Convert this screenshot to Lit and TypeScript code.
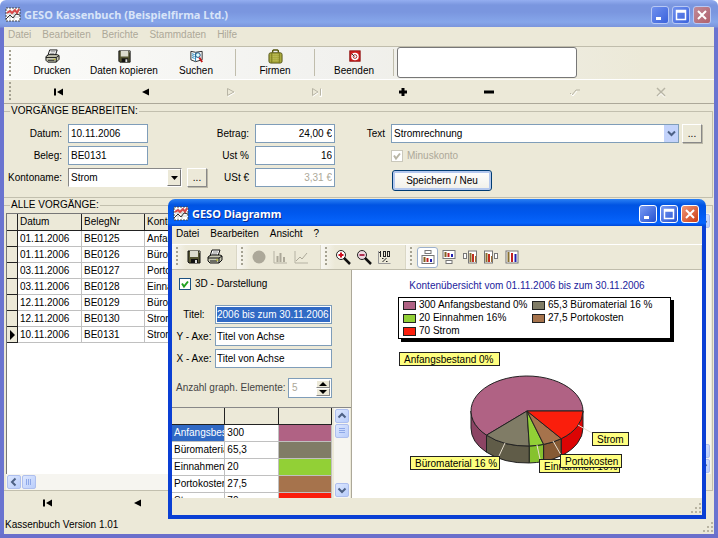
import { LitElement, html, svg, css, nothing } from "lit";
import { customElement, property } from "lit/decorators.js";
import { classMap } from "lit/directives/class-map.js";

const base = css`
  :host, * { box-sizing: border-box; }
  button, input, select { font: inherit; color: inherit; margin: 0; padding: 0; border-radius: 0; }
  button { background: none; border: 0; }
  svg { display: block; flex: none; }
  .grip {
    width: 2px; height: 20px; flex: none;
    background: repeating-linear-gradient(#a5a292 0 2px, transparent 2px 4px);
  }
  .tall { height: 27px; }
`;

const icons: Record<string, unknown> = {
  app: svg`<rect x="1" y="1" width="14" height="13" fill="#fff" stroke="#444" stroke-dasharray="2 1"/><path d="M2 4h12M2 7h12M2 10h12M5 2v11M9 2v11" stroke="#ccc"/><path d="M2 6l3-2 2 2 3-3 2 3 2-4" stroke="#d84848" fill="none" stroke-width="2"/><path d="M1 12l4-4 3 3 3-4 4 1" stroke="#333" fill="none"/>`,
  print: svg`<path d="M5 1h8l-2 6H3z" fill="#fff" stroke="#111"/><path d="M6 3h5M5 5h5" stroke="#888"/><path d="M1 8l3-2h9l2 1v4l-3 3H3l-2-2z" fill="#c8c8b4" stroke="#111"/><path d="M1 9h11l3-2M12 9v5M3 12h7" stroke="#111" fill="none"/><path d="M9 11h2" stroke="#b8b800"/>`,
  save: svg`<path d="M2 2h12v12H3l-1-1z" fill="#555533" stroke="#111"/><rect x="4" y="2" width="8" height="6" fill="#dcdccf"/><rect x="5" y="10" width="7" height="4" fill="#111"/><rect x="9" y="11" width="2" height="3" fill="#ddd"/><path d="M13 3h1" stroke="#ccc"/>`,
  search: svg`<path d="M2 2.500l5 1 7-1v9l-7 2-5-2z" fill="#fff" stroke="#222"/><path d="M7 4v9M3 5l3 1M3 7l3 1M3 9l3 1" stroke="#1b7fb5" fill="none"/><circle cx="9.500" cy="6.500" r="2.500" fill="#dff" stroke="#147"/><path d="M11 9l3 5" stroke="#c01818" stroke-width="2"/>`,
  bag: svg`<path d="M5 4V2l1-1h4l1 1v2" fill="none" stroke="#55550a" stroke-width="1.5"/><rect x="1" y="4" width="14" height="11" rx="2" fill="#a9a93c" stroke="#55551a"/><path d="M3 6h10M3 8h10M3 10h10M3 12h10" stroke="#c9c96a" stroke-dasharray="1 1"/><path d="M4 4v11M12 4v11" stroke="#77771c"/>`,
  quit: svg`<rect x="3" y="2" width="11" height="11" fill="#d42020" stroke="#8c0808"/><circle cx="8.500" cy="8" r="4" fill="#fff"/><circle cx="8.500" cy="8" r="2" fill="none" stroke="#a22"/><path d="M5 5l3 3" stroke="#222"/>`,
  pie: svg`<circle cx="8" cy="8" r="6.5" fill="#aca899"/>`,
  bars: svg`<path d="M2 2v12h13" fill="none" stroke="#b5b2a3"/><path d="M5.500 7v6M8.500 4v9M12 8v5" stroke="#aca899" stroke-width="2"/>`,
  line: svg`<path d="M2 2v12h13" fill="none" stroke="#b5b2a3"/><path d="M3 12l4-4 2 2 5-6" fill="none" stroke="#aca899"/>`,
  zoomin: svg`<circle cx="6" cy="6" r="4.500" fill="#fff" stroke="#222"/><path d="M3.500 6h5M6 3.500v5" stroke="#d01020" stroke-width="2"/><path d="M9 9l6 6" stroke="#111" stroke-width="2.500"/>`,
  zoomout: svg`<circle cx="6" cy="6" r="4.500" fill="#ecd8e0" stroke="#222"/><path d="M3.500 6h5" stroke="#b03050" stroke-width="2"/><path d="M9 9l6 6" stroke="#111" stroke-width="2.500"/>`,
  percent: svg`<path d="M1.500 2v12.500h12" stroke="#999" fill="none"/><path d="M3.500 2v6M2 3.500h1" fill="none" stroke="#222"/><rect x="6.500" y="2.500" width="2" height="5" fill="none" stroke="#222"/><rect x="10.500" y="2.500" width="2" height="5" fill="none" stroke="#222"/><path d="M5.500 13l4-4M5 9.500h1.500M9 12.500h1.500" stroke="#222"/>`,
  legTop: svg`<rect x="5" y="1.500" width="6" height="3" fill="#fff" stroke="#777"/><rect x="2" y="6.500" width="12" height="8" fill="#fff" stroke="#777"/><path d="M4.500 8v5" stroke="#806020" stroke-width="2"/><path d="M7.500 9v4" stroke="#c02020" stroke-width="2"/><path d="M11 10v3" stroke="#2020b0" stroke-width="2"/>`,
  legBottom: svg`<rect x="2" y="1.500" width="12" height="8" fill="#fff" stroke="#777"/><rect x="5" y="11.500" width="6" height="3" fill="#fff" stroke="#777"/><path d="M4.500 3v5" stroke="#806020" stroke-width="2"/><path d="M7.500 4v4" stroke="#c02020" stroke-width="2"/><path d="M11 5v3" stroke="#2020b0" stroke-width="2"/>`,
  legLeft: svg`<rect x="1.500" y="4.500" width="3" height="5" fill="#fff" stroke="#777"/><rect x="6.500" y="2" width="8" height="12" fill="#fff" stroke="#777"/><path d="M8.500 4v9" stroke="#887030" stroke-width="2"/><path d="M11 5v8" stroke="#c03020" stroke-width="2"/><path d="M13.500 7v6" stroke="#a07030"/>`,
  legRight: svg`<rect x="1.500" y="2" width="8" height="12" fill="#fff" stroke="#777"/><rect x="11.500" y="4.500" width="3" height="5" fill="#fff" stroke="#777"/><path d="M3.500 4v9" stroke="#887030" stroke-width="2"/><path d="M6 5v8" stroke="#c03020" stroke-width="2"/><path d="M8.500 7v6" stroke="#a07030"/>`,
  legNone: svg`<rect x="2" y="2" width="12" height="12" fill="#fff" stroke="#777"/><path d="M4.500 3v10" stroke="#887030" stroke-width="2"/><path d="M8 4v9" stroke="#c02020" stroke-width="2"/><path d="M11.500 5v8" stroke="#2020b0" stroke-width="2"/>`,
  first: svg`<path d="M4 4.500v7" stroke="#000" stroke-width="2"/><path d="M12 4.500v7L6 8z" fill="#000"/>`,
  prev: svg`<path d="M12 4.500v7L5 8z" fill="#000"/>`,
  next: svg`<path d="M4.500 4.500v7L11 8z" fill="none" stroke="#b8b5a5"/><path d="M5 12.500L12 8.500" stroke="#fff"/>`,
  last: svg`<path d="M3.500 4.500v7L9 8zM11.500 4.500v7" fill="none" stroke="#b8b5a5"/><path d="M12.500 5v7.500h-2M4 12.500L9 9" fill="none" stroke="#fff"/>`,
  plus: svg`<path d="M4 8h8M8 4v8" stroke="#000" stroke-width="3"/>`,
  minus: svg`<path d="M3 8h10" stroke="#000" stroke-width="3"/>`,
  check: svg`<path d="M3 9l2 2 4-5h4" fill="none" stroke="#b8b5a5"/><path d="M4 10l2 2 4-5" fill="none" stroke="#fff"/>`,
  cross: svg`<path d="M4 4l8 8M12 4l-8 8" stroke="#b8b5a5" stroke-width="1.500"/><path d="M5 12.500l3-3 4 4" fill="none" stroke="#fff"/>`,
};

const icon = (name: string, size = 16) =>
  html`<svg width=${size} height=${size} viewBox="0 0 16 16" aria-hidden="true">${icons[name]}</svg>`;

@customElement("title-bar")
class TitleBar extends LitElement {
  @property() caption = "";
  @property({ type: Boolean, reflect: true }) active = false;

  static styles = [base, css`
    :host {
      display: flex; align-items: center; gap: 3px; height: 27px; flex: none; padding: 3px 3px 0 1px;
      color: #d8e4f8; font: bold 11px/16px "Noto Sans", sans-serif;
    }
    .caption { flex: 1; margin: 0; font: inherit; white-space: nowrap; overflow: hidden; }
    :host([active]) { color: #fff; text-shadow: 1px 1px #0a2a90; }
    button {
      width: 18px; height: 18px; flex: none; border: 1px solid #b8c8f4; border-radius: 3px;
      background: linear-gradient(135deg, #6f90ee, #3a62dc); display: grid; place-items: center;
    }
    :host([active]) button { border-color: #fff; background: linear-gradient(135deg, #7a9cf4, #2450d0); }
    button.close { background: linear-gradient(135deg, #c08a98, #b0616c); }
    :host([active]) button.close { background: linear-gradient(135deg, #f09878, #cc3c14); }
  `];

  render() {
    return html`
      ${icon("app")}
      <h1 class="caption">${this.caption}</h1>
      <button aria-label="Minimieren"><svg width="12" height="12"><path d="M2 9.500h5" stroke="#fff" stroke-width="3"/></svg></button>
      <button aria-label="Maximieren"><svg width="12" height="12"><path d="M1.500 1.500h9v9h-9zM1 3h10" fill="none" stroke="#fff" stroke-width="1.500"/></svg></button>
      <button class="close" aria-label="Schließen"><svg width="12" height="12"><path d="M2 2l8 8M10 2l-8 8" stroke="#fff" stroke-width="2"/></svg></button>
    `;
  }
}

@customElement("scroll-bar")
class ScrollBar extends LitElement {
  @property({ reflect: true }) dir = "v";
  @property({ reflect: true }) at = "start";

  static styles = [base, css`
    :host { display: flex; flex-direction: column; width: 16px; background: #f6f5f0; padding: 1px; gap: 1px; flex: none; }
    :host([dir="h"]) { flex-direction: row; width: auto; height: 16px; }
    button, .thumb {
      width: 14px; height: 14px; flex: none; display: grid; place-items: center;
      border: 1px solid #aebfee; border-radius: 2px; background: linear-gradient(135deg, #dde7fe, #b9cdfb);
    }
    .room { flex: 1; }
  `];

  render() {
    const h = this.dir === "h";
    const arrow = (d: string, label: string) => html`
      <button aria-label=${label}><svg width="10" height="10"><path d=${d} fill="none" stroke="#4d6185" stroke-width="2"/></svg></button>`;
    const room = html`<div class="room"></div>`;
    return html`
      ${arrow(h ? "M6.500 1.500L3 5l3.500 3.500" : "M1.500 6.500L5 3l3.500 3.500", "Zurück")}
      ${this.at === "end" ? room : nothing}
      <div class="thumb"><svg width="8" height="8"><path d=${h ? "M1.500 1v6M3.500 1v6M5.500 1v6" : "M1 1.500h6M1 3.500h6M1 5.500h6"} stroke="#8ea8e8"/></svg></div>
      ${this.at === "end" ? nothing : room}
      ${arrow(h ? "M3.500 1.500L7 5 3.500 8.500" : "M1.500 3.500L5 7l3.500-3.500", "Weiter")}
    `;
  }
}

interface Slice { name: string; value: number; top: string; side: string; tag: number[]; leader: string; }

const slices: Slice[] = [
  { name: "Anfangsbestand 0%", value: 300, top: "#b06284", side: "#8c4464", tag: [47, 7, 100], leader: "" },
  { name: "Büromaterial 16 %", value: 65.3, top: "#807c66", side: "#605c48", tag: [58, 111, 89], leader: "M153 98l-6 13" },
  { name: "Einnahmen 16%", value: 20, top: "#92d036", side: "#86c22e", tag: [187, 114, 80], leader: "M185 100l3 14" },
  { name: "Portokosten", value: 27.5, top: "#a6734c", side: "#865a34", tag: [208, 109, 61], leader: "M201 96l8 14" },
  { name: "Strom", value: 70, top: "#fa1e0c", side: "#dc0404", tag: [240, 87, 36], leader: "M226 80l14 8" },
];
const amount = (v: number) => String(v).replace(".", ",");

@customElement("pie-chart")
class PieChart extends LitElement {
  static styles = css`
    :host { display: block; }
    svg { display: block; margin: 0 auto; }
    text { font: 10px "Liberation Sans", sans-serif; fill: #000; }
  `;

  render() {
    const cx = 175, cy = 66, rx = 56, ry = 35, depth = 17;
    const total = slices.reduce((sum, s) => sum + s.value, 0);
    const at = (a: number) => [cx + rx * Math.cos(a), cy - ry * Math.sin(a)];
    let from = 0;
    const parts = slices.map((s) => {
      const to = from + (s.value / total) * 2 * Math.PI;
      const [x0, y0] = at(from);
      const [x1, y1] = at(to);
      const big = to - from > Math.PI ? 1 : 0;
      const [sx, sy] = at(Math.max(from, Math.PI));
      const part = svg`
        <path fill=${s.side} d="M${sx} ${sy}A${rx} ${ry} 0 0 0 ${x1} ${y1}v${depth}A${rx} ${ry} 0 0 1 ${sx} ${sy + depth}z"/>
        <path fill=${s.top} d="M${cx} ${cy}L${x0} ${y0}A${rx} ${ry} 0 ${big} 0 ${x1} ${y1}z"/>`;
      from = to;
      return part;
    });
    return html`
      <svg width="350" height="140" viewBox="0 0 350 140" role="img" aria-label="Kontenübersicht">
        <g stroke="#222">${parts}</g>
        ${slices.map((s) => svg`
          <path d=${s.leader} stroke="#e8e0d0" fill="none"/>
          <rect x=${s.tag[0] + 0.5} y=${s.tag[1] + 0.5} width=${s.tag[2]} height="13" fill="#ffff80" stroke="#222"/>
          <text x=${s.tag[0] + 5} y=${s.tag[1] + 11}>${s.name}</text>`)}
      </svg>`;
  }
}

@customElement("chart-window")
class ChartWindow extends LitElement {
  static styles = [base, css`
    :host {
      display: flex; flex-direction: column; padding: 0 4px 4px; border-radius: 7px 7px 0 0; overflow: hidden;
      background: linear-gradient(#2a80f4, #0054e3 6px, #0058ee 14px, #0664fc 24px, #0048d8 27px, #0a3fd4 28px);
      font: 10px/12px "Liberation Sans", sans-serif; color: #000;
    }
    .menu { display: flex; gap: 11px; padding: 2px 4px 4px; background: #ece9d8; height: 18px; }
    .tools { display: grid; grid-template-columns: 65px 84px 85px 1fr; background: #ece9d8; border-top: 1px solid #fff; border-bottom: 1px solid #c0bdac; height: 26px; }
    .band { display: flex; align-items: center; padding-left: 4px; border-right: 1px solid #dad7c6; background: linear-gradient(90deg, #f8f7f2, #ece9d8 14px); }
    .grip { margin-right: 5px; }
    .tool { width: 21px; height: 21px; display: grid; place-items: center; border: 1px solid transparent; }
    .on { background: #fff; border-color: #9cb0cc; border-radius: 3px; }
    .body { flex: 1; min-height: 0; display: grid; grid-template-columns: 180px 1fr; background: #ece9d8; }
    .side { display: flex; flex-direction: column; min-height: 0; border-right: 1px solid #aca899; }
    .form { display: grid; grid-template-columns: 36px 117px; gap: 3px; padding: 8px 0 9px 4px; align-items: center; justify-items: center; }
    .form label { white-space: nowrap; }
    .form input.box { width: 117px; height: 19px; border: 1px solid #7f9db9; background: #fff; padding: 1px; }
    .form input.picked { color: #fff; background: #316ac5 content-box; box-shadow: inset 0 0 0 1px #fff; }
    .form .three { grid-column: 1 / -1; justify-self: start; display: flex; align-items: center; gap: 4px; margin: 0 0 12px 3px; }
    .three input { appearance: none; width: 12px; height: 12px; border: 1px solid #1c5180; background: #fff; }
    .mark { display: grid; }
    .mark > * { grid-area: 1 / 1; }
    .count { grid-column: 1 / -1; justify-self: stretch; display: flex; align-items: center; justify-content: space-between; margin-top: 7px; color: #444; }
    .spin { display: flex; width: 44px; height: 20px; border: 1px solid #7f9db9; background: #fff; padding: 1px; }
    .spin input { width: 0; flex: 1; border: 0; padding-left: 2px; background: none; color: #aca899; appearance: textfield; }
    .spin input::-webkit-inner-spin-button { display: none; }
    .steps { display: grid; width: 14px; }
    .steps button { background: #ece9d8; border: 1px solid #fff; border-right-color: #888; border-bottom-color: #888; display: grid; place-items: center; }
    .data { flex: 1; min-height: 0; display: flex; justify-content: space-between; overflow: hidden; border-top: 1px solid #888; padding-right: 1px; }
    .clip { overflow: hidden; }
    table { table-layout: fixed; width: 160px; border-collapse: separate; border-spacing: 0; background: #fff; }
    th { height: 17px; padding: 0; background: #ece9d8; border-right: 1px solid #222; border-bottom: 1px solid #222; }
    td { height: 17px; padding: 0 0 0 2px; border-right: 1px solid #c0c0c0; border-bottom: 1px solid #c0c0c0; white-space: nowrap; overflow: hidden; }
    .sel { background: #316ac5; color: #fff; }
    .chart { background: #fff; padding: 9px 0 0; min-width: 0; overflow: hidden; }
    h2 { margin: 0 0 5px; font: inherit; line-height: 13px; color: #1c1c9c; text-align: center; }
    .legend {
      display: grid; grid-template-columns: 129px 1fr; row-gap: 1px; margin: 0 31px 0 46px; padding: 1px 4px; list-style: none;
      border: 1px solid #000; box-shadow: 3px 3px #000; line-height: 12px;
    }
    .legend li { display: flex; align-items: center; gap: 3px; white-space: nowrap; height: 12px; }
    .legend i { width: 13px; height: 9px; border: 1px solid #222; }
    pie-chart { margin-top: 6px; }
    .foot { height: 17px; background: #ece9d8; display: flex; justify-content: flex-end; align-items: flex-end; padding: 1px; }
  `];

  render() {
    const band = (names: string[]) => html`
      <div class="band"><span class="grip"></span>${names.map((n) => html`
        <button class=${classMap({ tool: true, on: n === "legTop" })} aria-label=${n}>${icon(n)}</button>`)}</div>`;
    return html`
      <title-bar active caption="GESO Diagramm"></title-bar>
      <nav class="menu">${["Datei", "Bearbeiten", "Ansicht", "?"].map((m) => html`<button>${m}</button>`)}</nav>
      <div class="tools">
        ${band(["save", "print"])}
        ${band(["pie", "bars", "line"])}
        ${band(["zoomin", "zoomout", "percent"])}
        ${band(["legTop", "legBottom", "legLeft", "legRight", "legNone"])}
      </div>
      <div class="body">
        <div class="side">
          <div class="form">
            <label class="three"><span class="mark"><input type="checkbox" checked />
              <svg width="12" height="12"><path d="M3 5.500l2 3 4-5" fill="none" stroke="#21a121" stroke-width="2"/></svg></span>3D - Darstellung</label>
            <label for="titel">Titel:</label><input class="box picked" id="titel" value="2006 bis zum 30.11.2006" />
            <label for="y">Y - Axe:</label><input class="box" id="y" value="Titel von Achse" />
            <label for="x">X - Axe:</label><input class="box" id="x" value="Titel von Achse" />
            <div class="count">
              <label for="n">Anzahl graph. Elemente:</label>
              <div class="spin"><input id="n" type="number" value="5" disabled />
                <span class="steps">
                  <button aria-label="Mehr"><svg width="8" height="4"><path d="M0 4h8L4 0z"/></svg></button>
                  <button aria-label="Weniger"><svg width="8" height="4"><path d="M0 0h8L4 4z"/></svg></button>
                </span></div>
            </div>
          </div>
          <div class="data">
            <div class="clip">
              <table>
                <tr><th></th><th></th><th></th></tr>
                ${slices.map((s, i) => html`<tr>
                  <td class=${classMap({ sel: i === 0 })}>${s.name}</td>
                  <td>${amount(s.value)}</td>
                  <td style="background:${s.top}"></td></tr>`)}
              </table>
            </div>
            <scroll-bar></scroll-bar>
          </div>
        </div>
        <div class="chart">
          <h2>Kontenübersicht vom 01.11.2006 bis zum 30.11.2006</h2>
          <ul class="legend">${slices.map((s) => html`<li><i style="background:${s.top}"></i>${amount(s.value)} ${s.name}</li>`)}</ul>
          <pie-chart></pie-chart>
        </div>
      </div>
      <div class="foot"><svg width="11" height="11"><path d="M9 1h2M5 5h2M9 5h2M1 9h2M5 9h2M9 9h2" stroke="#b8b4a2" stroke-width="2"/></svg></div>
    `;
  }
}

const bookings = [
  ["01.11.2006", "BE0125", "Anfangsbestand"],
  ["01.11.2006", "BE0126", "Büromaterial"],
  ["03.11.2006", "BE0127", "Portokosten"],
  ["03.11.2006", "BE0128", "Einnahmen"],
  ["12.11.2006", "BE0129", "Büromaterial"],
  ["12.11.2006", "BE0130", "Strom"],
  ["10.11.2006", "BE0131", "Strom"],
];

@customElement("app-root")
class AppRoot extends LitElement {
  static styles = [base, css`
    :host {
      display: flex; flex-direction: column; position: relative; height: 100vh; padding: 0 4px; overflow: hidden;
      background: linear-gradient(#94aef0, #7a96df 5px, #7a96df 12px, #86a6ea 22px, #7b95dc 27px, #6a74d0 28px);
      border-bottom: 4px solid #6a6fcb; border-radius: 6px 6px 0 0;
      font: 10px/12px "Liberation Sans", sans-serif; color: #000;
    }
    .menu { display: flex; gap: 11px; padding: 2px 4px 5px; height: 19px; background: #ece9d8; color: #aca899; }
    .tools {
      display: flex; align-items: stretch; height: 34px; padding: 0 0 1px 5px; border-top: 1px solid #c0bdac; border-bottom: 1px solid #fff;
      background: linear-gradient(90deg, #fbfbf9, #f1f1ee 340px, #ece9d8 640px);
    }
    .tools .grip { margin: 3px 5px 0 0; }
    .tool { width: 72px; display: flex; flex-direction: column; align-items: center; padding-top: 2px; gap: 1px; white-space: nowrap; }
    .sep { width: 1px; margin: 2px 3px; background: #c0bdac; }
    .display { width: 180px; border: 1px solid #777; border-radius: 3px; background: #fff; }
    .nav { display: flex; align-items: center; height: 24px; background: #ece9d8; border-bottom: 1px solid #aca899; padding: 0 10px 0 5px; }
    .nav .grip { margin-right: 5px; }
    .keys { flex: 1; display: grid; grid-template-columns: repeat(8, 1fr); justify-items: center; }
    .work { flex: 1; min-height: 0; display: flex; flex-direction: column; background: #ece9d8; padding: 1px 1px 0 0; }
    fieldset { margin: 0; border: 1px solid #c2bfae; border-left: 0; padding: 0; min-width: 0; }
    legend { padding: 0 1px; margin-left: 6px; line-height: 12px; }
    .entry { display: flex; align-items: flex-start; padding: 7px 10px 10px 4px; }
    .cols { display: grid; grid-auto-rows: 19px; gap: 3px 6px; align-items: center; white-space: nowrap; }
    .cols label { justify-self: end; }
    .a { grid-template-columns: 54px 139px; margin-right: 10px; }
    .b { grid-template-columns: 32px 80px; margin-right: 32px; }
    .c { flex: 1; grid-template-columns: 18px 1fr; }
    .box { width: 80px; height: 19px; border: 1px solid #7f9db9; background: #fff; padding: 0 2px; }
    .num { text-align: right; }
    .box:disabled { color: #aca899; }
    .pair { display: flex; gap: 5px; }
    .pair.tight { gap: 3px; }
    .combo { position: relative; width: 114px; height: 19px; border: 1px solid; border-color: #888 #fff #fff #888; background: #fff; }
    .combo.wide { flex: 1; border: 1px solid #7f9db9; }
    .combo select { appearance: none; width: 100%; height: 17px; border: 0; background: none; padding-left: 2px; }
    .combo span { position: absolute; top: 0; right: 0; width: 14px; height: 17px; display: grid; place-items: center; pointer-events: none; background: #ece9d8; border: 1px solid; border-color: #fff #777 #777 #fff; }
    .combo.wide span { border: 0; background: #c3d3fb; }
    .dots { width: 20px; height: 19px; background: #ece9d8; border: 1px solid; border-color: #fff #888 #888 #fff; box-shadow: 1px 1px #bbb8a8; }
    .minus { grid-column: 2; display: flex; align-items: center; gap: 4px; color: #aca899; }
    .cols .minus { justify-self: start; }
    .mark { display: grid; }
    .mark > * { grid-area: 1 / 1; }
    .mark input { appearance: none; width: 12px; height: 12px; border: 1px solid #cac8bb; background: #fff; }
    .save { grid-column: 2; align-self: start; width: 100px; height: 21px; border: 1px solid #003c74; border-radius: 3px; background: linear-gradient(#fff, #f0efe8); box-shadow: inset 0 0 0 2px #b4c8ee; margin: 2px 0 0 1px; }
    .list { flex: 1; min-height: 0; margin-top: 1px; }
    .grid { height: 100%; display: grid; grid-template: minmax(0, 1fr) 16px / 1fr 16px; padding: 2px 1px 0 2px; }
    .sheet { background: #fff; border-left: 1px solid #777; border-top: 1px solid #777; overflow: hidden; }
    table { table-layout: fixed; border-spacing: 0; width: 100%; }
    th, td { height: 16px; padding: 0 2px; text-align: left; font-weight: normal; white-space: nowrap; overflow: hidden; border-right: 1px solid #c0c0c0; border-bottom: 1px solid #c0c0c0; }
    thead th { height: 17px; }
    thead th, .row { background: #ece9d8; border-right-color: #222; border-bottom-color: #222; }
    .row { padding: 0; }
    .sign { width: 11px; } .date { width: 64px; } .no { width: 63px; }
    .foot { display: flex; align-items: center; height: 24px; background: #ece9d8; }
    .status { height: 19px; background: #ece9d8; display: flex; justify-content: space-between; padding: 4px 1px 1px; }
    .status svg { align-self: flex-end; }
    chart-window { position: absolute; left: 168px; right: 12px; top: 199px; bottom: 15px; }
  `];

  render() {
    const tool = (name: string, text: string) => html`<button class="tool">${icon(name, 15)}${text}</button>`;
    const keys = (names: string[]) => html`<div class="keys">${names.map((n) => html`<button aria-label=${n}>${icon(n)}</button>`)}</div>`;
    const all = ["first", "prev", "next", "last", "plus", "minus", "check", "cross"];
    return html`
      <title-bar caption="GESO Kassenbuch (Beispielfirma Ltd.)"></title-bar>
      <nav class="menu">${["Datei", "Bearbeiten", "Berichte", "Stammdaten", "Hilfe"].map((m) => html`<button>${m}</button>`)}</nav>
      <div class="tools">
        <span class="grip tall"></span>
        ${tool("print", "Drucken")}${tool("save", "Daten kopieren")}${tool("search", "Suchen")}
        <span class="sep"></span>${tool("bag", "Firmen")}
        <span class="sep"></span>${tool("quit", "Beenden")}
        <span class="sep"></span><input class="display" aria-label="Anzeige" />
      </div>
      <div class="nav"><span class="grip"></span>${keys(all)}</div>
      <main class="work">
        <fieldset>
          <legend>VORGÄNGE BEARBEITEN:</legend>
          <div class="entry">
            <div class="cols a">
              <label for="datum">Datum:</label><input class="box" id="datum" value="10.11.2006" />
              <label for="beleg">Beleg:</label><input class="box" id="beleg" value="BE0131" />
              <label for="konto">Kontoname:</label>
              <div class="pair">
                <div class="combo"><select id="konto"><option>Strom</option></select>
                  <span><svg width="7" height="4"><path d="M0 0h7L3.500 4z"/></svg></span></div>
                <button class="dots">...</button>
              </div>
            </div>
            <div class="cols b">
              <label for="betrag">Betrag:</label><input class="box num" id="betrag" value="24,00 €" />
              <label for="ust">Ust %</label><input class="box num" id="ust" value="16" />
              <label for="eur">USt €</label><input class="box num" id="eur" value="3,31 €" disabled />
            </div>
            <div class="cols c">
              <label for="text">Text</label>
              <div class="pair tight">
                <div class="combo wide"><select id="text"><option>Stromrechnung</option></select>
                  <span><svg width="9" height="7"><path d="M1 1.500l3.500 3.500L8 1.500" fill="none" stroke="#4d6185" stroke-width="2"/></svg></span></div>
                <button class="dots">...</button>
              </div>
              <label class="minus"><span class="mark"><input type="checkbox" checked disabled />
                <svg width="12" height="12"><path d="M3 5.500l2 3 4-5" fill="none" stroke="#b8b5a5" stroke-width="2"/></svg></span>Minuskonto</label>
              <button class="save">Speichern / Neu</button>
            </div>
          </div>
        </fieldset>
        <fieldset class="list">
          <legend>ALLE VORGÄNGE:</legend>
          <div class="grid">
            <div class="sheet">
              <table>
                <thead><tr><th class="sign"></th><th class="date">Datum</th><th class="no">BelegNr</th><th>Kontoname</th></tr></thead>
                <tbody>${bookings.map((b, i) => html`<tr>
                  <th class="row">${i === 6 ? html`<svg width="9" height="10"><path d="M3 0v10l5-5z"/></svg>` : nothing}</th>
                  ${b.map((c) => html`<td>${c}</td>`)}</tr>`)}</tbody>
              </table>
            </div>
            <scroll-bar at="end"></scroll-bar>
            <scroll-bar dir="h"></scroll-bar>
          </div>
        </fieldset>
      </main>
      <div class="foot">${keys(all)}</div>
      <footer class="status">Kassenbuch Version 1.01
        <svg width="11" height="11"><path d="M9 1h2M5 5h2M9 5h2M1 9h2M5 9h2M9 9h2" stroke="#b8b4a2" stroke-width="2"/></svg></footer>
      <chart-window></chart-window>
    `;
  }
}
